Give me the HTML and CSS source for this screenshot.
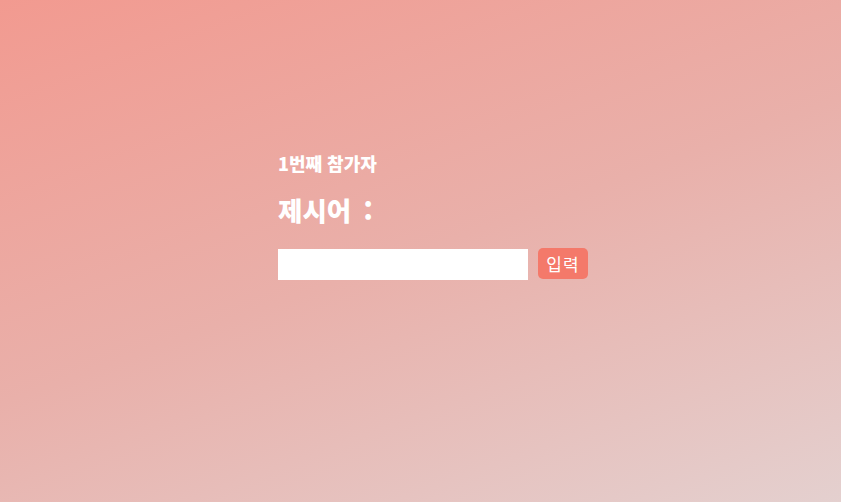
FILE: index.html
```html
<!DOCTYPE html>
<html lang="ko">
<head>
<meta charset="utf-8">
<link rel="stylesheet" href="styles.css">
</head>
<body>
<main class="page">
  <section class="entry">
    <p class="player">1번째 참가자</p>
    <h1 class="word">제시어 :</h1>
    <form class="row">
      <input class="field" type="text">
      <button class="submit" type="button">입력</button>
    </form>
  </section>
</main>
</body>
</html>
```
FILE: styles.css
```css
html, body {
  margin: 0;
  height: 100%;
}
body {
  background: linear-gradient(160deg, #f29a90 0%, #e9b0aa 50%, #e4d0cf 100%);
  font-family: "Noto Sans CJK KR", "Noto Sans", sans-serif;
  color: #fff;
}
.page {
  padding: 151px 0 0 278px;
}
.entry {
  display: flex;
  flex-direction: column;
}
.player {
  margin: 0;
  font-size: 18px;
  font-weight: 900;
  line-height: 24px;
}
.word {
  margin: 17px 0 0;
  font-size: 26.5px;
  font-weight: 900;
  line-height: 36px;
  word-spacing: 5px;
}
.row {
  display: flex;
  align-items: flex-start;
  gap: 10px;
  margin-top: 20px;
}
.field {
  width: 250px;
  height: 31px;
  box-sizing: border-box;
  border: none;
  background: #fff;
  margin: 1px 0 0;
  padding: 0 6px;
}
.submit {
  width: 50px;
  height: 31px;
  border: none;
  border-radius: 5px;
  background: #f4796a;
  color: #fff;
  font-family: "Noto Sans CJK KR", sans-serif;
  font-size: 17px;
  letter-spacing: 1px;
  padding: 0;
  line-height: 31px;
}
```
